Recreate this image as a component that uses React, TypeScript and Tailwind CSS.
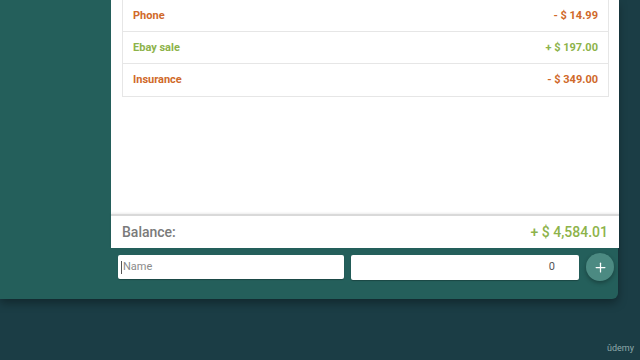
import { Plus } from "lucide-react";

const rows = [
  { name: "Phone", amount: "- $ 14.99", income: false },
  { name: "Ebay sale", amount: "+ $ 197.00", income: true },
  { name: "Insurance", amount: "- $ 349.00", income: false },
];

export default function App() {
  return (
    <main
      className="relative w-[640px] h-[360px] overflow-hidden bg-[#1b3d45]"
      style={{ fontFamily: "Roboto, 'Liberation Sans', sans-serif" }}
    >
      <div className="flex w-[618px] h-[299px] bg-[#245f5b] rounded-br-[6px] shadow-[0_4px_10px_rgba(0,0,0,0.35)]">
        <div className="w-[111px] shrink-0" />
        <div className="flex-1 flex flex-col">
          <div className="h-[248px] bg-white flex flex-col">
            <div className="flex-1 pl-[11px] pr-[10px]">
              <div className="-mt-px border border-[#e6e6e6]">
                {rows.map((r, i) => (
                  <div
                    key={r.name}
                    className={
                      "h-[32px] flex items-center justify-between px-[10px] pt-px text-[11px] font-bold " +
                      (i < rows.length - 1 ? "border-b border-[#e6e6e6] " : "") +
                      (r.income ? "text-[#8db34a]" : "text-[#d0692a]")
                    }
                  >
                    <span>{r.name}</span>
                    <span>{r.amount}</span>
                  </div>
                ))}
              </div>
            </div>
            <div className="h-[34px] border-t-2 border-[#d9d9d9] shadow-[0_-1px_2px_rgba(0,0,0,0.08)] flex items-center justify-between pl-[11px] pr-[11px]">
              <span className="text-[14px] font-medium text-[#7a7a7a]">Balance:</span>
              <span className="text-[14px] font-medium text-[#8db34a]">+ $ 4,584.01</span>
            </div>
          </div>
          <div className="flex-1 flex items-start pt-[5px] pl-[7px] pr-[5px] gap-[7px]">
            <div className="mt-[2px] w-[226px] h-[24px] bg-white rounded-[2px] flex items-center px-[3px] text-[11px] text-[#8a8a8a] shadow-[0_1px_1px_rgba(0,0,0,0.25)]">
              <span className="w-px h-[13px] bg-[#555] mr-[1px]" />
              Name
            </div>
            <div className="mt-[2px] w-[228px] h-[25px] bg-white rounded-[2px] flex items-center justify-end pr-[24px] text-[11px] text-[#555] shadow-[0_1px_1px_rgba(0,0,0,0.25)]">
              0
            </div>
            <button className="ml-auto w-[28px] h-[28px] rounded-full bg-[#4c8a82] flex items-center justify-center text-white shadow-[0_2px_4px_rgba(0,0,0,0.3)]">
              <Plus size={15} strokeWidth={2} />
            </button>
          </div>
        </div>
      </div>
      <span className="absolute right-[6px] bottom-[5px] text-[9px] text-[#8fa9ab]">
        ûdemy
      </span>
    </main>
  );
}
